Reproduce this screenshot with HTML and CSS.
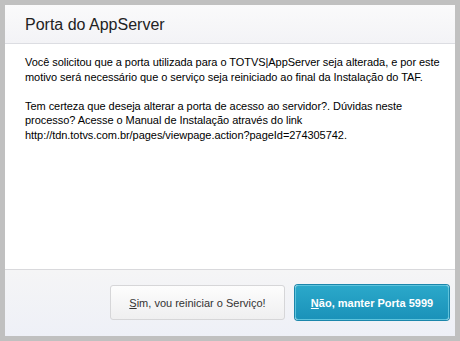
FILE: index.html
```html
<!DOCTYPE html>
<html lang="pt-BR">
<head>
    <meta charset="UTF-8">
    <title>Porta do AppServer</title>
    <link rel="stylesheet" href="styles.css">
</head>
<body>

    <div class="dialog">
        <div class="header">
            <h2>Porta do AppServer</h2>
        </div>

        <div class="content">
            <p>Você solicitou que a porta utilizada para o TOTVS|AppServer seja alterada, e por este motivo será necessário que o serviço seja reiniciado ao final da Instalação do TAF.</p>
            <p>Tem certeza que deseja alterar a porta de acesso ao servidor?. Dúvidas neste processo? Acesse o Manual de Instalação através do link http://tdn.totvs.com.br/pages/viewpage.action?pageId=274305742.</p>
        </div>

        <div class="footer">
            <button class="btn btn-default"><u>S</u>im, vou reiniciar o Serviço!</button>
            <button class="btn btn-primary"><u>N</u>ão, manter Porta 5999</button>
        </div>
    </div>

</body>
</html>
```

FILE: styles.css
```css
* {
    margin: 0;
    padding: 0;
    box-sizing: border-box;
}

body {
    background: #c0c0c0;
    padding: 5px;
    font-family: "Liberation Sans", Arial, sans-serif;
}

.dialog {
    width: 450px;
    height: 331px;
    background: #fff;
    display: flex;
    flex-direction: column;
}

.header {
    height: 39px;
    padding-left: 20px;
    display: flex;
    align-items: center;
    background: linear-gradient(#fafafb, #f3f3f6);
    border-bottom: 1px solid #dcdde2;
}

.header h2 {
    font-weight: normal;
    font-size: 16px;
    color: #222;
    padding-top: 1px;
}

.content {
    flex: 1;
    padding: 11px 12px 0 20px;
    font-size: 11px;
    line-height: 14.5px;
    letter-spacing: -0.05px;
    color: #000;
}

.content p {
    margin-bottom: 14.5px;
}

.footer {
    height: 67px;
    border-top: 1px solid #d9d9dc;
    background: linear-gradient(#f5f5f6, #eef0f7);
    display: flex;
    justify-content: flex-end;
    align-items: flex-start;
    gap: 10px;
    padding: 15px 6px 0 0;
}

.btn {
    height: 35px;
    border-radius: 3px;
    font-family: "Liberation Sans", Arial, sans-serif;
    font-size: 11px;
    cursor: pointer;
}

.btn-default {
    width: 175px;
    background: linear-gradient(#fdfdfd, #efeff0);
    border: 1px solid #d6d6d8;
    color: #333;
}

.btn-primary {
    width: 154px;
    background: linear-gradient(#2ba8ca, #1a92b9);
    border: 1px solid #5ec3dc;
    box-shadow: 0 0 0 1px #1b86ab;
    color: #fff;
    font-weight: bold;
}
```
